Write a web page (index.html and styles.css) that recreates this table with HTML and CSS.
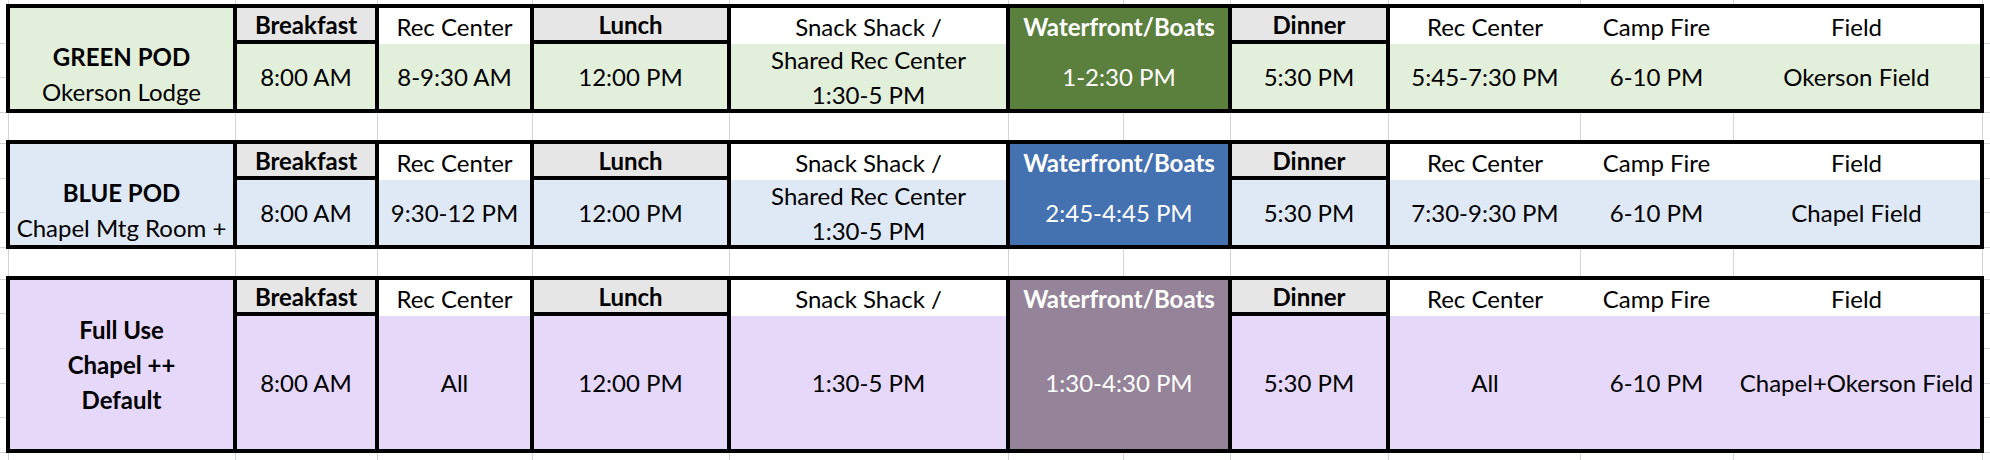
FILE: index.html
```html
<!DOCTYPE html>
<html>
<head>
<meta charset="utf-8">
<link rel="stylesheet" href="styles.css">
</head>
<body>
<div class="sheet">
  <div class="pod green">
    <div class="label bottom"><b>GREEN POD</b><span>Okerson Lodge</span></div>
    <div class="cell hd boxed">Breakfast</div>
    <div class="cell plain">Rec Center</div>
    <div class="cell hd boxed">Lunch</div>
    <div class="cell plain">Snack Shack /</div>
    <div class="cell wf boxed">Waterfront/Boats</div>
    <div class="cell hd rboxed">Dinner</div>
    <div class="cell plain">Rec Center</div>
    <div class="cell plain">Camp Fire</div>
    <div class="cell plain">Field</div>

    <div class="cell data sides">8:00 AM</div>
    <div class="cell data">8-9:30 AM</div>
    <div class="cell data sides">12:00 PM</div>
    <div class="cell data multi"><span>Shared Rec Center</span><span>1:30-5 PM</span></div>
    <div class="cell wfdata sides">1-2:30 PM</div>
    <div class="cell data rside">5:30 PM</div>
    <div class="cell data">5:45-7:30 PM</div>
    <div class="cell data">6-10 PM</div>
    <div class="cell data">Okerson Field</div>
  </div>

  <div class="pod blue">
    <div class="label bottom"><b>BLUE POD</b><span>Chapel Mtg Room +</span></div>
    <div class="cell hd boxed">Breakfast</div>
    <div class="cell plain">Rec Center</div>
    <div class="cell hd boxed">Lunch</div>
    <div class="cell plain">Snack Shack /</div>
    <div class="cell wf boxed">Waterfront/Boats</div>
    <div class="cell hd rboxed">Dinner</div>
    <div class="cell plain">Rec Center</div>
    <div class="cell plain">Camp Fire</div>
    <div class="cell plain">Field</div>

    <div class="cell data sides">8:00 AM</div>
    <div class="cell data">9:30-12 PM</div>
    <div class="cell data sides">12:00 PM</div>
    <div class="cell data multi"><span>Shared Rec Center</span><span>1:30-5 PM</span></div>
    <div class="cell wfdata sides">2:45-4:45 PM</div>
    <div class="cell data rside">5:30 PM</div>
    <div class="cell data">7:30-9:30 PM</div>
    <div class="cell data">6-10 PM</div>
    <div class="cell data">Chapel Field</div>
  </div>

  <div class="pod purple">
    <div class="label middle"><b>Full Use</b><b>Chapel ++</b><b>Default</b></div>
    <div class="cell hd boxed">Breakfast</div>
    <div class="cell plain">Rec Center</div>
    <div class="cell hd boxed">Lunch</div>
    <div class="cell plain">Snack Shack /</div>
    <div class="cell wf boxed">Waterfront/Boats</div>
    <div class="cell hd rboxed">Dinner</div>
    <div class="cell plain">Rec Center</div>
    <div class="cell plain">Camp Fire</div>
    <div class="cell plain">Field</div>

    <div class="cell data sides">8:00 AM</div>
    <div class="cell data">All</div>
    <div class="cell data sides">12:00 PM</div>
    <div class="cell data">1:30-5 PM</div>
    <div class="cell wfdata sides">1:30-4:30 PM</div>
    <div class="cell data rside">5:30 PM</div>
    <div class="cell data">All</div>
    <div class="cell data">6-10 PM</div>
    <div class="cell data">Chapel+Okerson Field</div>
  </div>
</div>
</body>
</html>
```

FILE: styles.css
```css
* { box-sizing: border-box; }

html, body {
  margin: 0;
  padding: 0;
  background: #fff;
  overflow: hidden;
}

.sheet {
  width: 1990px;
  height: 460px;
  overflow: hidden;
  padding: 4px 6px 0 6px;
  display: flex;
  flex-direction: column;
  gap: 27px;
  font-family: Lato, "Liberation Sans", sans-serif;
  font-size: 24px;
  color: #000;
  background-color: #fff;
  background-repeat: no-repeat;
  background-image:
    linear-gradient(#d4d4d4, #d4d4d4), linear-gradient(#d4d4d4, #d4d4d4),
    linear-gradient(#d4d4d4, #d4d4d4), linear-gradient(#d4d4d4, #d4d4d4),
    linear-gradient(#d4d4d4, #d4d4d4), linear-gradient(#d4d4d4, #d4d4d4),
    linear-gradient(#d4d4d4, #d4d4d4), linear-gradient(#d4d4d4, #d4d4d4),
    linear-gradient(#d4d4d4, #d4d4d4), linear-gradient(#d4d4d4, #d4d4d4),
    linear-gradient(#d4d4d4, #d4d4d4), linear-gradient(#d4d4d4, #d4d4d4),
    linear-gradient(#d4d4d4, #d4d4d4), linear-gradient(#d4d4d4, #d4d4d4),
    linear-gradient(#d4d4d4, #d4d4d4), linear-gradient(#d4d4d4, #d4d4d4),
    linear-gradient(#d4d4d4, #d4d4d4), linear-gradient(#d4d4d4, #d4d4d4),
    linear-gradient(#d4d4d4, #d4d4d4), linear-gradient(#d4d4d4, #d4d4d4),
    linear-gradient(#d4d4d4, #d4d4d4), linear-gradient(#d4d4d4, #d4d4d4),
    linear-gradient(#d4d4d4, #d4d4d4), linear-gradient(#d4d4d4, #d4d4d4),
    linear-gradient(#d4d4d4, #d4d4d4);
  background-size:
    1px 100%, 1px 100%, 1px 100%, 1px 100%, 1px 100%, 1px 100%,
    1px 100%, 1px 100%, 1px 100%, 1px 100%, 1px 100%, 1px 100%,
    100% 1px, 100% 1px, 100% 1px, 100% 1px, 100% 1px, 100% 1px,
    100% 1px, 100% 1px, 100% 1px, 100% 1px, 100% 1px, 100% 1px,
    100% 1px;
  background-position:
    8px 0, 235px 0, 377px 0, 532px 0, 729px 0, 1008px 0,
    1123px 0, 1230px 0, 1388px 0, 1580px 0, 1733px 0, 1982px 0,
    0 43px, 0 77px, 0 112px, 0 143px, 0 178px, 0 212px,
    0 247px, 0 279px, 0 313px, 0 348px, 0 383px, 0 417px,
    0 452px;
}

.pod {
  flex: none;
  display: grid;
  grid-template-columns: 223px 146px 151px 201px 275px 226px 158px 190px 153px 247px;
  grid-template-rows: 36px 65px;
  border: 4px solid #000;
  width: 1978px;
}

.pod.purple { grid-template-rows: 36px 133px; }

.green { --fill: #e2efda; --wf: #5b7f3c; }
.blue { --fill: #dfe9f5; --wf: #4471b0; }
.purple { --fill: #e6d8f9; --wf: #958399; }

.label {
  grid-row: 1 / 3;
  background: var(--fill);
  display: flex;
  flex-direction: column;
  align-items: center;
  line-height: 35px;
  text-align: center;
  white-space: nowrap;
}

.label.bottom { justify-content: flex-end; padding-bottom: 0; }
.label.middle { justify-content: center; }

.cell {
  display: flex;
  align-items: center;
  justify-content: center;
  text-align: center;
  white-space: nowrap;
  line-height: 35px;
}

.plain { background: #fff; }

.hd {
  background: #e7e6e6;
  font-weight: 700;
  border-bottom: 4px solid #000;
}

.boxed {
  border-left: 4px solid #000;
  border-right: 4px solid #000;
}

.rboxed { border-right: 4px solid #000; }

.wf {
  background: var(--wf);
  color: #fff;
  font-weight: 700;
}

.wfdata {
  background: var(--wf);
  color: #fff;
}

.data { background: var(--fill); }

.sides {
  border-left: 4px solid #000;
  border-right: 4px solid #000;
}

.rside { border-right: 4px solid #000; }

.multi { flex-direction: column; }
```
